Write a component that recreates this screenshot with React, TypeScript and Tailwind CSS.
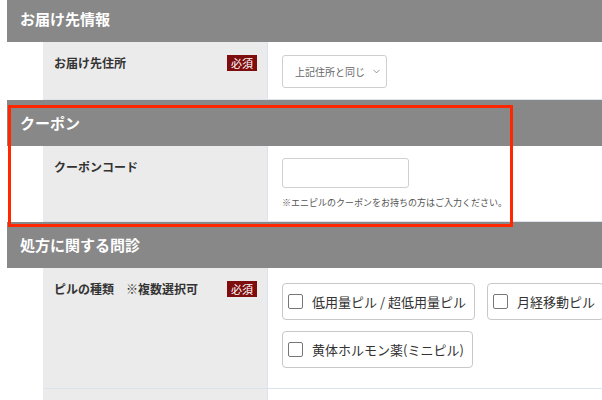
import React from 'react';
import { ChevronDown } from 'lucide-react';

const font = { fontFamily: '"Noto Sans CJK JP", "Noto Sans", sans-serif' };

const SectionHeader: React.FC<{ title: string; className?: string }> = ({ title, className = '' }) => (
  <div className={`h-[46px] bg-[#888888] flex items-center pl-[13px] text-white font-bold text-[15px] ${className}`}>
    {title}
  </div>
);

const Badge: React.FC = () => (
  <span className="bg-[#7e0d0d] text-white text-[11px] leading-[16px] h-[16px] px-[4px] shrink-0">必須</span>
);

const Row: React.FC<{
  label: string;
  required?: boolean;
  height: string;
  children?: React.ReactNode;
}> = ({ label, required, height, children }) => (
  <div className={`flex ml-[36px] border-b border-[#dbe3ee] ${height}`}>
    <div className="w-[225px] shrink-0 bg-[#ebebeb] border-r border-[#dbe3ee] flex justify-between items-start pt-[13px] pl-[11px] pr-[10px]">
      <span className="text-[12px] leading-[16px] font-bold text-[#333]">{label}</span>
      {required && <Badge />}
    </div>
    <div className="flex-1 pl-[14px]">{children}</div>
  </div>
);

const CheckItem: React.FC<{ label: string }> = ({ label }) => (
  <label className="h-[37px] flex items-center border border-[#c8c8c8] rounded-[4px] pl-[5px] pr-[8px] bg-white">
    <span className="w-[15px] h-[15px] border border-[#777] rounded-[2px] shrink-0" />
    <span className="ml-[9px] text-[13px] text-[#333] whitespace-nowrap">{label}</span>
  </label>
);

export default function App() {
  return (
    <div className="relative w-[602px] h-[400px] overflow-hidden bg-white" style={font}>
      <div className="w-[640px] pl-[7px] -mt-[4px]">
        <SectionHeader title="お届け先情報" />
        <Row label="お届け先住所" required height="h-[58px]">
          <div className="pt-[13px]">
            <div className="w-[105px] h-[33px] border border-[#cfcfcf] rounded-[3px] flex items-center justify-between pl-[12px] pr-[4px] text-[10px] text-[#666] whitespace-nowrap">
              <span>上記住所と同じ</span>
              <ChevronDown size={11} strokeWidth={1.5} className="text-[#666] shrink-0" />
            </div>
          </div>
        </Row>

        <SectionHeader title="クーポン" />
        <Row label="クーポンコード" height="h-[76px]">
          <div className="pt-[12px]">
            <div className="w-[127px] h-[30px] border border-[#d0d0d0] rounded-[3px]" />
            <p className="mt-[9px] text-[9px] leading-[12px] text-[#555] whitespace-nowrap">
              ※エニピルのクーポンをお持ちの方はご入力ください。
            </p>
          </div>
        </Row>

        <SectionHeader title="処方に関する問診" />
        <Row label="ピルの種類　※複数選択可" required height="h-[121px]">
          <div className="pt-[15px] flex flex-wrap gap-x-[12px] gap-y-[11px]">
            <CheckItem label="低用量ピル / 超低用量ピル" />
            <CheckItem label="月経移動ピル" />
            <CheckItem label="黄体ホルモン薬(ミニピル)" />
          </div>
        </Row>
        <Row label="" height="h-[60px]" />
      </div>

      {/* highlight frame over the coupon section */}
      <div className="absolute left-[8px] top-[105px] w-[505px] h-[122px] border-[3px] border-[#ff2600] pointer-events-none" />
    </div>
  );
}
